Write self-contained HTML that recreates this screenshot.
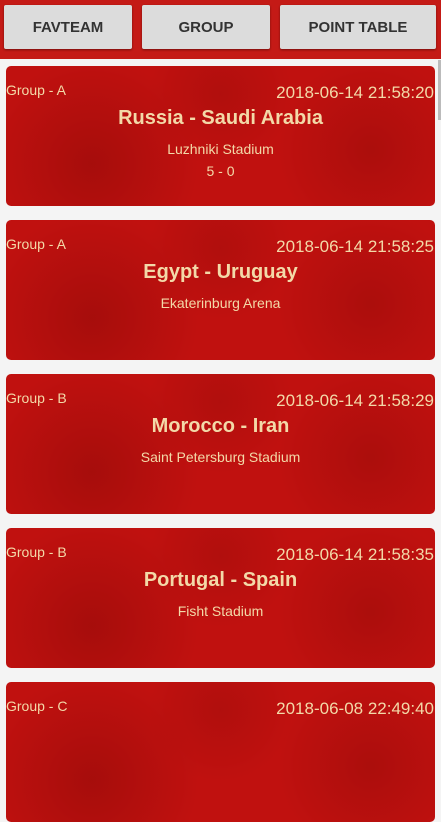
<!DOCTYPE html>
<html><head><style>
body{margin:0;width:441px;height:714px;overflow:hidden;background:#f4f4f4;font-family:"Liberation Sans",sans-serif;position:relative}
.hdr{position:absolute;left:0;top:0;width:441px;height:59px;background:#c41a16}
.btn{position:absolute;top:5px;height:44px;background:#dcdcdc;border-radius:2px;box-shadow:0 1px 2px rgba(0,0,0,.4);color:#333;font-size:15px;font-weight:bold;display:flex;align-items:center;justify-content:center}
.card{position:absolute;left:6px;width:429px;height:140px;background:#c0110f;border-radius:5px;color:#f3d9a8;overflow:hidden;
background-image:radial-gradient(circle at 20% 70%,rgba(90,0,0,.25),transparent 30%),radial-gradient(circle at 85% 60%,rgba(90,0,0,.2),transparent 25%),radial-gradient(circle at 50% 20%,rgba(90,0,0,.15),transparent 30%)}
.g{position:absolute;left:0;top:16px;font-size:14px}
.d{position:absolute;right:1px;top:17px;font-size:17px}
.t{position:absolute;left:0;right:0;top:41px;text-align:center;font-size:20px;font-weight:bold}
.s{position:absolute;left:0;right:0;top:75px;text-align:center;font-size:14px}
.sc{position:absolute;left:0;right:0;top:97px;text-align:center;font-size:14px}
.sb{position:absolute;right:0;top:60px;width:3px;height:60px;background:#bbb}
</style></head><body>
<div class="hdr"></div>
<div class="btn" style="left:4px;width:128px">FAVTEAM</div>
<div class="btn" style="left:142px;width:128px">GROUP</div>
<div class="btn" style="left:280px;width:156px">POINT TABLE</div>
<div class="card" style="top:66px"><div class="g">Group - A</div><div class="d">2018-06-14 21:58:20</div><div class="t">Russia - Saudi Arabia</div><div class="s">Luzhniki Stadium</div><div class="sc">5 - 0</div></div>
<div class="card" style="top:220px"><div class="g">Group - A</div><div class="d">2018-06-14 21:58:25</div><div class="t">Egypt - Uruguay</div><div class="s">Ekaterinburg Arena</div></div>
<div class="card" style="top:374px"><div class="g">Group - B</div><div class="d">2018-06-14 21:58:29</div><div class="t">Morocco - Iran</div><div class="s">Saint Petersburg Stadium</div></div>
<div class="card" style="top:528px"><div class="g">Group - B</div><div class="d">2018-06-14 21:58:35</div><div class="t">Portugal - Spain</div><div class="s">Fisht Stadium</div></div>
<div class="card" style="top:682px"><div class="g">Group - C</div><div class="d">2018-06-08 22:49:40</div></div>
<div class="sb"></div>
</body></html>
